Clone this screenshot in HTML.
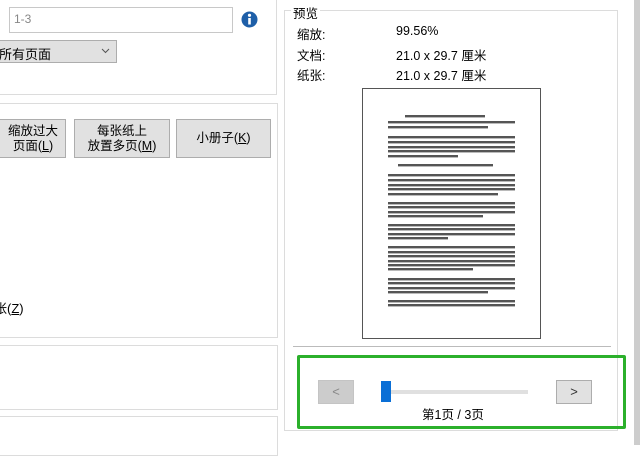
<!DOCTYPE html>
<html><head><meta charset="utf-8"><style>
*{margin:0;padding:0;box-sizing:border-box}
body{width:640px;height:445px;background:#fff;position:relative;overflow:hidden;font-family:"Liberation Sans","Noto Sans CJK SC",sans-serif;font-size:12px;color:#000}
.a{position:absolute}
.gb{position:absolute;border:1px solid #dcdcdc}
.btn{position:absolute;background:#e1e1e1;border:1px solid #adadad;text-align:center;font-size:12.5px;line-height:15px}
u{text-decoration:underline}
</style></head><body>
<!-- left panel -->
<div class="gb" style="left:-2px;top:-2px;width:279px;height:97px"></div>
<div class="a" style="left:9px;top:7px;width:224px;height:26px;border:1px solid #c8c8c8;background:#fff;color:#888;padding:4px 4px;font-size:12px">1-3</div>
<svg class="a" style="left:241px;top:11px" width="17" height="17" viewBox="0 0 17 17"><circle cx="8.5" cy="8.5" r="8" fill="#1e5fa8"/><circle cx="8.5" cy="4.3" r="1.6" fill="#fff"/><rect x="7.2" y="7" width="2.6" height="6.5" fill="#fff"/></svg>
<div class="a" style="left:-2px;top:40px;width:119px;height:23px;border:1px solid #adadad;background:#e1e1e1;padding:3px 0 0 0;font-size:13px">所有页面</div>
<svg class="a" style="left:101px;top:48px" width="9" height="6"><path d="M1 1 L4.5 4.5 L8 1" fill="none" stroke="#555" stroke-width="1"/></svg>

<div class="gb" style="left:-2px;top:103px;width:280px;height:235px"></div>
<div class="btn" style="left:-10px;top:119px;width:76px;height:39px;padding:4px 0 0 10px">缩放过大<br>页面(<u>L</u>)</div>
<div class="btn" style="left:74px;top:119px;width:96px;height:39px;padding:4px 0 0 0">每张纸上<br>放置多页(<u>M</u>)</div>
<div class="btn" style="left:176px;top:119px;width:95px;height:39px;padding:11px 0 0 0">小册子(<u>K</u>)</div>
<div class="a" style="left:-6px;top:298px;font-size:13px">张(<u>Z</u>)</div>
<div class="gb" style="left:-2px;top:345px;width:280px;height:65px"></div>
<div class="gb" style="left:-2px;top:416px;width:280px;height:40px"></div>

<!-- right panel -->
<div class="gb" style="left:284px;top:10px;width:334px;height:421px"></div>
<div class="a" style="left:291px;top:3px;background:#fff;padding:0 2px;font-size:12.5px">预览</div>
<div class="a" style="left:297px;top:24px;font-size:12.5px">缩放:</div>
<div class="a" style="left:396px;top:24px;font-size:12.5px">99.56%</div>
<div class="a" style="left:297px;top:45px;font-size:12.5px">文档:</div>
<div class="a" style="left:396px;top:45px;font-size:12.5px">21.0 x 29.7 厘米</div>
<div class="a" style="left:297px;top:65px;font-size:12.5px">纸张:</div>
<div class="a" style="left:396px;top:65px;font-size:12.5px">21.0 x 29.7 厘米</div>

<div class="a" style="left:362px;top:88px;width:179px;height:251px;border:1.5px solid #555;background:#fff"></div>
<svg class="a" style="left:362px;top:88px" width="179" height="251">
<g fill="#555">
<rect x="43" y="27" width="80" height="2.4"/>
<rect x="26" y="33" width="127" height="2.4"/><rect x="26" y="38" width="100" height="2.4"/>
<rect x="26" y="48" width="127" height="2.4"/><rect x="26" y="53" width="127" height="2.4"/><rect x="26" y="58" width="127" height="2.4"/><rect x="26" y="62" width="127" height="2.4"/><rect x="26" y="67" width="70" height="2.4"/>
<rect x="36" y="76" width="95" height="2.4"/>
<rect x="26" y="86" width="127" height="2.4"/><rect x="26" y="91" width="127" height="2.4"/><rect x="26" y="96" width="127" height="2.4"/><rect x="26" y="100" width="127" height="2.4"/><rect x="26" y="105" width="110" height="2.4"/>
<rect x="26" y="114" width="127" height="2.4"/><rect x="26" y="118" width="127" height="2.4"/><rect x="26" y="123" width="127" height="2.4"/><rect x="26" y="127" width="95" height="2.4"/>
<rect x="26" y="136" width="127" height="2.4"/><rect x="26" y="140" width="127" height="2.4"/><rect x="26" y="145" width="127" height="2.4"/><rect x="26" y="149" width="60" height="2.4"/>
<rect x="26" y="158" width="127" height="2.4"/><rect x="26" y="163" width="127" height="2.4"/><rect x="26" y="167" width="127" height="2.4"/><rect x="26" y="172" width="127" height="2.4"/><rect x="26" y="176" width="127" height="2.4"/><rect x="26" y="180" width="85" height="2.4"/>
<rect x="26" y="190" width="127" height="2.4"/><rect x="26" y="194" width="127" height="2.4"/><rect x="26" y="199" width="127" height="2.4"/><rect x="26" y="203" width="100" height="2.4"/>
<rect x="26" y="212" width="127" height="2.4"/><rect x="26" y="216" width="127" height="2.4"/>
</g></svg>

<div class="a" style="left:293px;top:346px;width:318px;height:1px;background:#bbb"></div>
<div class="a" style="left:297px;top:355px;width:329px;height:74px;border:3px solid #2bb02b;border-radius:2px"></div>
<div class="a" style="left:318px;top:380px;width:36px;height:24px;background:#cccccc;border:1px solid #c4c4c4;color:#888;text-align:center;line-height:21px;font-size:13px">&lt;</div>
<div class="a" style="left:556px;top:380px;width:36px;height:24px;background:#e1e1e1;border:1px solid #adadad;color:#333;text-align:center;line-height:21px;font-size:13px">&gt;</div>
<div class="a" style="left:381px;top:390px;width:147px;height:4px;background:#e0e0e0"></div>
<div class="a" style="left:381px;top:381px;width:10px;height:21px;background:#0a6fd6"></div>
<div class="a" style="left:422px;top:404px;font-size:12.5px">第1页 / 3页</div>

<div class="a" style="left:634px;top:0;width:6px;height:445px;background:#cdcdcd"></div>
</body></html>
